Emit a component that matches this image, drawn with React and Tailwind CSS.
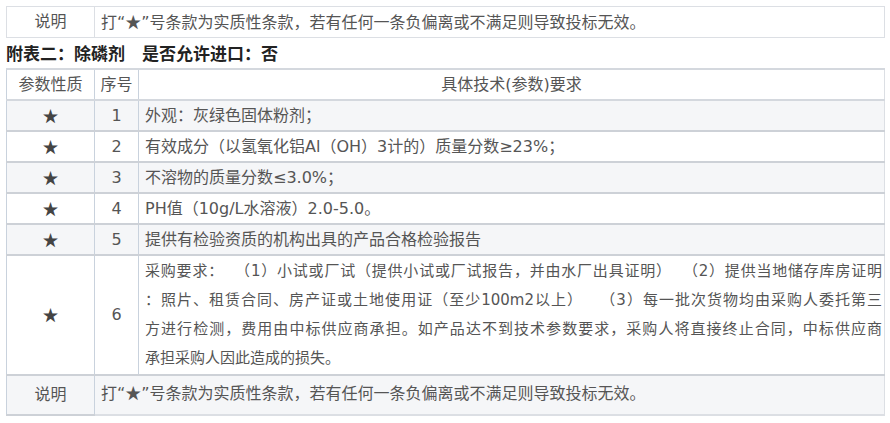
import React from "react";

const Star = () => <span className="font-['Noto_Sans_CJK_SC',sans-serif]">★</span>;

const rows = [
  { no: 1, text: "外观：灰绿色固体粉剂；" },
  { no: 2, text: "有效成分（以氢氧化铝Al（OH）3计的）质量分数≥23%；" },
  { no: 3, text: "不溶物的质量分数≤3.0%；" },
  { no: 4, text: "PH值（10g/L水溶液）2.0-5.0。" },
  { no: 5, text: "提供有检验资质的机构出具的产品合格检验报告" },
];

const longLines = [
  "采购要求：  （1）小试或厂试（提供小试或厂试报告，并由水厂出具证明）  （2）提供当地储存库房证明",
  "：照片、租赁合同、房产证或土地使用证（至少100m2以上）   （3）每一批次货物均由采购人委托第三",
  "方进行检测，费用由中标供应商承担。如产品达不到技术参数要求，采购人将直接终止合同，中标供应商",
];

const Note = () => (
  <>
    打“<Star />”号条款为实质性条款，若有任何一条负偏离或不满足则导致投标无效。
  </>
);

const App = () => {
  return (
    <div className="w-[890px] h-[423px] bg-white px-[6px] pt-[6px] text-[16px] text-[#555] font-['DejaVu_Sans','Noto_Sans_CJK_SC',sans-serif]">
      {/* top note */}
      <table className="w-[879px] border-collapse table-fixed">
        <tbody>
          <tr className="h-[31px]">
            <td className="w-[88px] border border-[#dcdfe4] text-center">说明</td>
            <td className="border border-[#dcdfe4] pl-[6px]">
              <Note />
            </td>
          </tr>
        </tbody>
      </table>

      {/* heading */}
      <div className="h-[30px] flex items-center gap-[17px] font-bold text-[17px] text-[#222] font-['Noto_Sans_CJK_SC',sans-serif]">
        <span>附表二：除磷剂</span>
        <span>是否允许进口：否</span>
      </div>

      {/* spec table */}
      <table className="w-[879px] border-collapse table-fixed">
        <thead>
          <tr className="h-[31px] bg-white">
            <th className="w-[88px] font-normal border-x border-x-[#c9d2dd] border-y-2 border-y-[#d4d8de] text-center">参数性质</th>
            <th className="w-[44px] font-normal border-x border-x-[#c9d2dd] border-y-2 border-y-[#d4d8de] text-center">序号</th>
            <th className="font-normal border-x border-x-[#dcdfe4] border-y-2 border-y-[#d4d8de] text-center">具体技术(参数)要求</th>
          </tr>
        </thead>
        <tbody>
          {rows.map((r, i) => (
            <tr key={r.no} className={i % 2 === 0 ? "h-[31px] bg-[#f5f6f8]" : "h-[31px] bg-white"}>
              <td className="border-x border-x-[#c9d2dd] border-y-2 border-y-[#cdd1d7] text-center text-[#444]">
                <Star />
              </td>
              <td className="border-x border-x-[#c9d2dd] border-y-2 border-y-[#cdd1d7] text-center">{r.no}</td>
              <td className="border-x border-x-[#dcdfe4] border-y-2 border-y-[#cdd1d7] pl-[6px]">{r.text}</td>
            </tr>
          ))}
          <tr className="h-[120px] bg-white">
            <td className="border-x border-x-[#c9d2dd] border-y-2 border-y-[#cdd1d7] text-center text-[#444]">
              <Star />
            </td>
            <td className="border-x border-x-[#c9d2dd] border-y-2 border-y-[#cdd1d7] text-center">6</td>
            <td className="border-x border-x-[#dcdfe4] border-y-2 border-y-[#cdd1d7] pl-[6px] pr-[2px] py-[1px] text-[15px] leading-[29px]">
              {longLines.map((l) => (
                <div key={l} className="whitespace-pre text-justify [text-align-last:justify]">
                  {l}
                </div>
              ))}
              <div>承担采购人因此造成的损失。</div>
            </td>
          </tr>
          <tr className="h-[40px] bg-[#f5f6f8]">
            <td className="border-x border-x-[#c9d2dd] border-y-2 border-y-[#cdd1d7] text-center">说明</td>
            <td colSpan={2} className="align-top pt-[4px] border-x border-x-[#dcdfe4] border-y-2 border-y-[#dcdfe4] pl-[6px]">
              <Note />
            </td>
          </tr>
        </tbody>
      </table>
    </div>
  );
};

export default App;
